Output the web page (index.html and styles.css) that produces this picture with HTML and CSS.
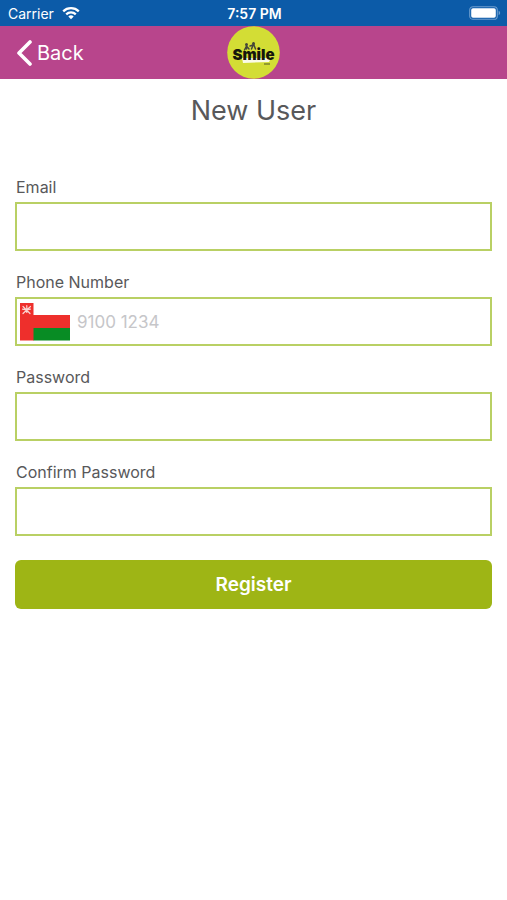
FILE: index.html
```html
<!DOCTYPE html>
<html lang="en">
<head>
<meta charset="utf-8">
<meta name="viewport" content="width=device-width, initial-scale=1">
<title>New User</title>
<link rel="stylesheet" href="styles.css">
</head>
<body>
<div class="status">
  <div class="status-left">
    <span>Carrier</span>
    <svg class="wifi" viewBox="0 0 18 14" aria-hidden="true">
      <g fill="none" stroke="#fff" stroke-width="2.3">
        <path d="M1.2 5.3a11.2 11.2 0 0 1 15.6 0"/>
        <path d="M4.2 8.4a6.9 6.9 0 0 1 9.6 0"/>
      </g>
      <path d="M9 13.2 6.3 10.5a3.9 3.9 0 0 1 5.4 0z" fill="#fff"/>
    </svg>
  </div>
  <span class="clock">7:57 PM</span>
  <svg class="battery" viewBox="0 0 32 14" aria-hidden="true">
    <rect x=".7" y=".7" width="27.6" height="12.6" rx="3.4" fill="none" stroke="#6d9dce" stroke-width="1.1"/>
    <rect x="2.2" y="2.2" width="24.6" height="9.6" rx="1.8" fill="#fff"/>
    <path d="M29.6 4.8c2 .7 2 3.7 0 4.4z" fill="#6d9dce"/>
  </svg>
</div>
<header class="nav">
  <a class="back" href="#">
    <svg class="chevron" viewBox="0 0 16 26" aria-hidden="true"><path d="M14 2 3 13l11 11" fill="none" stroke="#fff" stroke-width="3.6" stroke-linecap="round" stroke-linejoin="round"/></svg>
    <span>Back</span>
  </a>
  <svg class="logo" viewBox="0 0 53 53" role="img" aria-label="Smile">
    <circle cx="26.5" cy="26.5" r="26.3" fill="#d3dd35"/>
    <path d="M15 32h29l-2 4-26 1z" fill="#fbfbe8"/>
    <g fill="none" stroke="#44463a" stroke-width="1.5" stroke-linecap="round">
      <path d="m17.5 24 2-4 2.500 3M19.500 20v3M24.500 23l2-5 2 5M23 20l3-1"/>
    </g>
    <circle cx="19.500" cy="18.500" r="1.500" fill="#44463a"/>
    <circle cx="26.500" cy="17.500" r="1.500" fill="#44463a"/>
    <text class="logo-word" x="26.500" y="33.500" text-anchor="middle">Smile</text>
    <path d="M37 38h6" stroke="#7c832c" stroke-width="1.500"/>
  </svg>
</header>
<main class="page">
  <h1>New User</h1>
  <form class="form">
    <div class="field">
      <label for="email">Email</label>
      <input class="box" id="email" type="email">
    </div>
    <div class="field">
      <label for="phone">Phone Number</label>
      <div class="box phone">
        <svg class="flag" viewBox="0 0 50 38" aria-hidden="true">
          <path d="M0 0h13.500v12H50v13H0z" fill="#ee2f2c"/>
          <path d="M0 24h14v13.500H0z" fill="#ee2f2c"/>
          <path d="M13.500 25H50v12.500H13.500z" fill="#088c24"/>
          <g fill="none" stroke="#fbd5d2" stroke-width="1.200" stroke-linecap="round">
            <path d="m3 3.500 7 7M10.500 3.500l-7.500 7M6.800 2.500v7M2.500 6.200l4 .6 4-.6"/>
          </g>
        </svg>
        <input class="bare" id="phone" type="tel" placeholder="9100 1234">
      </div>
    </div>
    <div class="field">
      <label for="password">Password</label>
      <input class="box" id="password" type="password">
    </div>
    <div class="field">
      <label for="confirm">Confirm Password</label>
      <input class="box" id="confirm" type="password">
    </div>
    <button class="register" type="button">Register</button>
  </form>
</main>
</body>
</html>
```
FILE: styles.css
```css
* { box-sizing: border-box; }

body {
  margin: 0;
  background: #fff;
  color: #58585a;
  font-family: Inter, "Liberation Sans", sans-serif;
  font-size: 16px;
}

svg { display: block; }

.status {
  display: grid;
  grid-template-columns: 1fr auto 1fr;
  align-items: center;
  height: 26px;
  padding: 0 6px 0 8px;
  background: #0c5ba8;
  color: #fff;
  font-size: 14px;
}

.status-left {
  display: flex;
  align-items: center;
  gap: 8px;
}

.wifi { width: 18px; height: 14px; }
.clock { font-weight: 600; }
.battery { width: 32px; height: 14px; justify-self: end; }

.nav {
  display: grid;
  grid-template-columns: 1fr auto 1fr;
  align-items: center;
  height: 53px;
  padding: 0 16px;
  background: #b8458c;
}

.back {
  display: flex;
  align-items: center;
  justify-self: start;
  gap: 5px;
  color: #fff;
  font-size: 20px;
  text-decoration: none;
}

.chevron { width: 16px; height: 26px; }
.logo { width: 53px; height: 53px; }

.logo-word {
  fill: #15160c;
  font-size: 15px;
  font-weight: 900;
}

.page { padding: 14px 15px; }

h1 {
  margin: 0 0 47px;
  font-size: 27px;
  font-weight: 400;
  line-height: 36px;
  text-align: center;
}

.form, .field {
  display: flex;
  flex-direction: column;
}

.form { gap: 20px; }
.field { gap: 4px; }
label { padding-left: 1px; line-height: 22px; }

.box {
  width: 100%;
  height: 49px;
  padding: 0 12px;
  border: 2px solid #b9d064;
  border-radius: 0;
  background: #fff;
  color: inherit;
  font: inherit;
}

.phone {
  display: flex;
  align-items: center;
  gap: 7px;
  padding: 0 3px;
}

.flag { flex: none; width: 50px; height: 38px; }

.bare {
  flex: 1;
  min-width: 0;
  padding: 0;
  border: 0;
  background: none;
  color: inherit;
  font: inherit;
  font-size: 17px;
}

.bare::placeholder { color: #c6c6c9; opacity: 1; }

.register {
  height: 49px;
  margin-top: 4px;
  border: 0;
  border-radius: 6px;
  background: #9eb515;
  color: #fff;
  font: inherit;
  font-size: 19px;
  font-weight: 600;
}
```
